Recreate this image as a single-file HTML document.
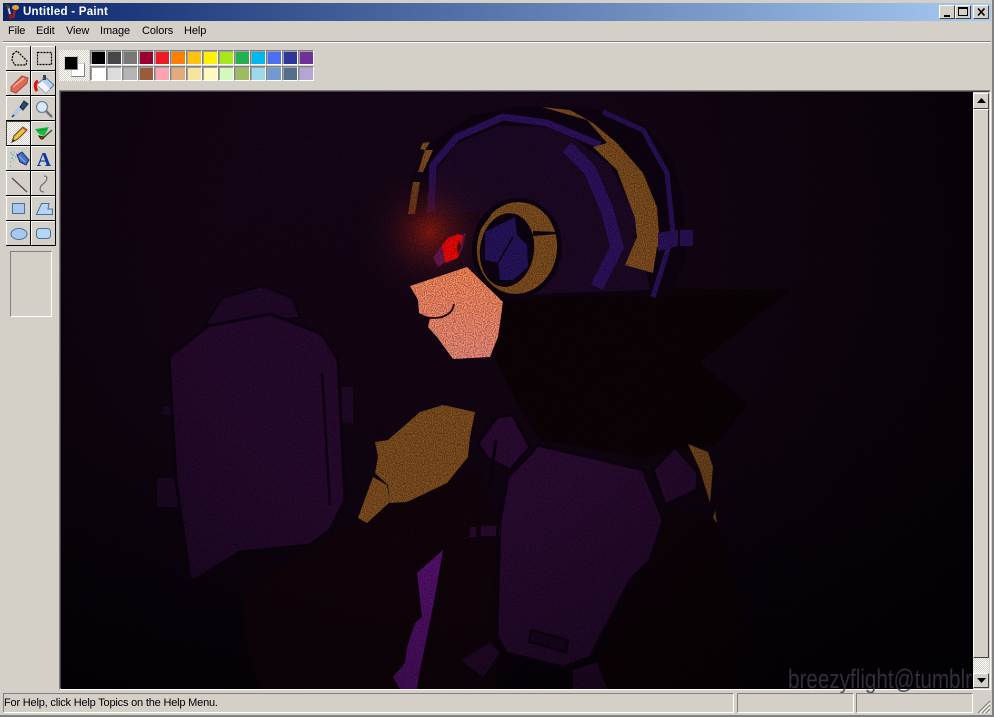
<!DOCTYPE html>
<html><head><meta charset="utf-8"><title>Untitled - Paint</title>
<style>
html,body{margin:0;padding:0;background:#d4d0c8}
body{width:994px;height:717px;position:relative;overflow:hidden;font-family:"Liberation Sans",sans-serif;font-size:11px;color:#000}
.a{position:absolute}
#edge{left:0;top:0;width:992px;height:715px;border-right:2px solid #808080;border-bottom:2px solid #808080;box-sizing:content-box}
#title{left:3px;top:3px;width:988px;height:18px;background:linear-gradient(90deg,#0a246a,#a6caf0)}
#tt{left:23px;top:5px;color:#fff;font-weight:bold;font-size:11.5px;line-height:14px;letter-spacing:.25px}
.wb{top:5px;height:14px;width:16px;box-sizing:border-box;background:#d4d0c8;border-top:1px solid #fff;border-left:1px solid #fff;border-right:1px solid #404040;border-bottom:1px solid #404040}
.m{top:25px;line-height:13px;letter-spacing:-.1px}
.sw{position:absolute;width:16px;height:15px;box-sizing:border-box;border:1px solid;border-color:#808080 #fff #fff #808080;box-shadow:inset 1px 1px 0 #a0a0a0}
.tb{position:absolute;width:24px;height:24px;border-top:1px solid #fff;border-left:1px solid #fff;box-sizing:border-box;background:#d4d0c8}
.tb svg{position:absolute;left:0;top:0}
.st{top:693px;height:20px;box-sizing:border-box;border:1px solid;border-color:#808080 #fff #fff #808080}
.dith{background:repeating-conic-gradient(#d4d0c8 0 25%,#fff 0 50%) 0 0/2px 2px}
.sb{left:973px;width:16px;box-sizing:border-box;background:#d4d0c8;border-top:1px solid #fff;border-left:1px solid #fff;border-right:1px solid #404040;border-bottom:1px solid #404040}
</style></head><body>
<div class="a" id="edge"></div>
<div class="a" id="title"></div>
<svg class="a" style="left:5px;top:4px" width="14" height="17" viewBox="0 0 14 17"><path d="M3 2L6 14" stroke="#c8c8d8" stroke-width="2"/><path d="M5 10L6 15" stroke="#8a1a1a" stroke-width="3"/><path d="M10 6L8 14" stroke="#a02020" stroke-width="2.500"/><ellipse cx="10.500" cy="3.500" rx="3.500" ry="2.500" fill="#e8a030"/><path d="M1 1L4 4" stroke="#604020" stroke-width="2"/></svg>
<div class="a" id="tt">Untitled - Paint</div>
<div class="a wb" style="left:939px"><div class="a" style="left:4px;top:9px;width:6px;height:2px;background:#000"></div></div>
<div class="a wb" style="left:955px"><div class="a" style="left:2px;top:1px;width:10px;height:9px;box-sizing:border-box;border:1px solid #000;border-top-width:2px"></div></div>
<div class="a wb" style="left:973px"><svg class="a" style="left:3px;top:2px" width="9" height="8"><path d="M1 0.500L7.500 7.500M7.500 0.500L1 7.500" stroke="#000" stroke-width="1.600"/></svg></div>
<div class="a m" style="left:8px">File</div><div class="a m" style="left:36px">Edit</div><div class="a m" style="left:66px">View</div><div class="a m" style="left:100px">Image</div><div class="a m" style="left:142px">Colors</div><div class="a m" style="left:184px">Help</div>
<div class="a" style="left:3px;top:41px;width:988px;height:1px;background:#808080"></div>
<div class="a" style="left:3px;top:42px;width:988px;height:1px;background:#fff"></div>

<!-- tools -->
<div class="a" style="left:6px;top:46px;width:50px;height:200px;background:#000"></div>
<div class="tb" style="left:6px;top:46px"><svg width="24" height="24"><path d="M6 7L10 4L15 9L20 14L19 18L8 18L5 13Z" fill="none" stroke="#000" stroke-width="1.200" stroke-dasharray="2 1"/></svg></div>
<div class="tb" style="left:31px;top:46px"><svg width="24" height="24"><rect x="5.500" y="5.500" width="14" height="12" fill="none" stroke="#000" stroke-width="1.200" stroke-dasharray="2 1"/></svg></div>
<div class="tb" style="left:6px;top:71px"><svg width="24" height="24"><path d="M4 15L15 4L21 6L20 11L9 21L4 19Z" fill="#dd6a55" stroke="#a84a38"/><path d="M6 15L17 6" fill="none" stroke="#f4a896" stroke-width="1.500"/></svg></div>
<div class="tb" style="left:31px;top:71px"><svg width="24" height="24"><path d="M13 5L22 13L14 21L5 13Z" fill="#b8d0f0" stroke="#5a7ca8"/><path d="M5 13L14 21L18 17L10 9Z" fill="#fff" opacity=".8"/><path d="M6 9C2 11 3 16 5 19" fill="none" stroke="#e01010" stroke-width="3"/><rect x="11" y="3" width="3" height="5" fill="#444"/></svg></div>
<div class="tb" style="left:6px;top:96px"><svg width="24" height="24"><path d="M6 19L14 10" stroke="#b0c8e8" stroke-width="4"/><path d="M5 20L7 18" stroke="#303848" stroke-width="1.500"/><path d="M13 10L17 4L21 7L16 13Z" fill="#2a4a70" stroke="#1a2a40"/></svg></div>
<div class="tb" style="left:31px;top:96px"><svg width="24" height="24"><circle cx="10" cy="10" r="5.500" fill="#d8e8f8" stroke="#708898" stroke-width="1.300"/><path d="M14 14L20 20" stroke="#707070" stroke-width="2.500"/></svg></div>
<div class="tb dith" style="left:6px;top:121px;border-color:#404040;border-width:1px 0 0 1px"><svg width="24" height="24"><path d="M5 20L7 14L16 5L20 8L11 17Z" fill="#f0c040" stroke="#604010"/><path d="M5 20L6 17L8 19Z" fill="#202020"/><path d="M15 6L19 9L20 8L16 5Z" fill="#e04040"/></svg></div>
<div class="tb" style="left:31px;top:121px"><svg width="24" height="24"><path d="M3 7L17 5L14 11L12 14L7 12Z" fill="#10c040"/><path d="M5 9L15 7" stroke="#0a9030"/><path d="M10 17L20 8" stroke="#504030" stroke-width="1.500"/><path d="M7 14C9 18 11 18 12 15Z" fill="#806020" stroke="#402000"/></svg></div>
<div class="tb" style="left:6px;top:146px"><svg width="24" height="24"><path d="M10 8L15 5L22 13L19 18L13 15Z" fill="#4070c8" stroke="#203070"/><path d="M12 9L18 15" stroke="#90b0e8"/><path d="M3 6h2M7 5h1M5 8h2M9 7h1M4 11h2M8 10h1M3 15h1M6 13h1M3 19h1" stroke="#40b0d8"/></svg></div>
<div class="tb" style="left:31px;top:146px"><svg width="24" height="24"><text x="12" y="19" text-anchor="middle" font-family="Liberation Serif,serif" font-weight="bold" font-size="20" fill="#1038a8">A</text></svg></div>
<div class="tb" style="left:6px;top:171px"><svg width="24" height="24"><path d="M5 6L20 20" stroke="#505050" stroke-width="1.300"/></svg></div>
<div class="tb" style="left:31px;top:171px"><svg width="24" height="24"><path d="M12 4C17 4 15 9 11 12C7 15 7 20 12 20" fill="none" stroke="#707070" stroke-width="1.200"/></svg></div>
<div class="tb" style="left:6px;top:196px"><svg width="24" height="24"><rect x="5.500" y="6.500" width="12" height="10" fill="#a8c8f0" stroke="#4a70a0"/></svg></div>
<div class="tb" style="left:31px;top:196px"><svg width="24" height="24"><path d="M4.500 17.500L9.500 6.500H17L16 12H20.500V17.500Z" fill="#b8d4f4" stroke="#4a70a0"/></svg></div>
<div class="tb" style="left:6px;top:221px"><svg width="24" height="24"><ellipse cx="12" cy="12" rx="8" ry="5.500" fill="#a8c8f0" stroke="#4a70a0"/></svg></div>
<div class="tb" style="left:31px;top:221px"><svg width="24" height="24"><rect x="4.500" y="6.500" width="14" height="10" rx="3" fill="#b8d4f4" stroke="#4a70a0"/></svg></div>
<div class="a" style="left:10px;top:251px;width:42px;height:66px;box-sizing:border-box;border:1px solid;border-color:#808080 #fff #fff #808080"></div>

<!-- colour box -->
<div class="a dith" style="left:59px;top:50px;width:30px;height:31px"></div>
<div class="a" style="left:71px;top:63px;width:14px;height:14px;background:#fff;box-sizing:border-box;border:1px solid;border-color:#d4d0c8 #808080 #808080 #d4d0c8"></div>
<div class="a" style="left:64px;top:56px;width:14px;height:14px;background:#000;box-sizing:border-box;border:1px solid;border-color:#d4d0c8 #808080 #808080 #d4d0c8"></div>

<i class="sw" style="left:90px;top:50px;background:#000000"></i><i class="sw" style="left:106px;top:50px;background:#464646"></i><i class="sw" style="left:122px;top:50px;background:#787878"></i><i class="sw" style="left:138px;top:50px;background:#990030"></i><i class="sw" style="left:154px;top:50px;background:#ed1c24"></i><i class="sw" style="left:170px;top:50px;background:#ff7e00"></i><i class="sw" style="left:186px;top:50px;background:#ffc20e"></i><i class="sw" style="left:202px;top:50px;background:#fff200"></i><i class="sw" style="left:218px;top:50px;background:#a8e61d"></i><i class="sw" style="left:234px;top:50px;background:#22b14c"></i><i class="sw" style="left:250px;top:50px;background:#00b7ef"></i><i class="sw" style="left:266px;top:50px;background:#4d6df3"></i><i class="sw" style="left:282px;top:50px;background:#2f3699"></i><i class="sw" style="left:298px;top:50px;background:#6f3198"></i>
<i class="sw" style="left:90px;top:66px;background:#ffffff"></i><i class="sw" style="left:106px;top:66px;background:#dcdcdc"></i><i class="sw" style="left:122px;top:66px;background:#b4b4b4"></i><i class="sw" style="left:138px;top:66px;background:#9c5a3c"></i><i class="sw" style="left:154px;top:66px;background:#ffa3b1"></i><i class="sw" style="left:170px;top:66px;background:#e5aa7a"></i><i class="sw" style="left:186px;top:66px;background:#f5e49c"></i><i class="sw" style="left:202px;top:66px;background:#fff9bd"></i><i class="sw" style="left:218px;top:66px;background:#d3f9bc"></i><i class="sw" style="left:234px;top:66px;background:#9dbb61"></i><i class="sw" style="left:250px;top:66px;background:#99d9ea"></i><i class="sw" style="left:266px;top:66px;background:#709ad1"></i><i class="sw" style="left:282px;top:66px;background:#546d8e"></i><i class="sw" style="left:298px;top:66px;background:#b5a5d5"></i>

<!-- canvas frame -->
<div class="a" style="left:59px;top:90px;width:932px;height:600px;box-sizing:border-box;border:1px solid;border-color:#808080 #fff #fff #808080"></div>
<div class="a" style="left:60px;top:91px;width:930px;height:598px;box-sizing:border-box;border:1px solid;border-color:#404040 #d4d0c8 #d4d0c8 #404040"></div>

<svg class="a" style="left:0;top:0" width="994" height="717" viewBox="0 0 994 717">
<defs>
<clipPath id="cv"><rect x="61" y="92" width="912" height="597"/></clipPath>
<filter id="nz" x="0" y="0" width="100%" height="100%" color-interpolation-filters="sRGB"><feTurbulence type="fractalNoise" baseFrequency="0.9" numOctaves="1" seed="4"/><feColorMatrix values="0 0 0 0 0 0 0 0 0 0 0 0 0 0 0 8 0 0 0 -3.600"/></filter>
<radialGradient id="glow" gradientUnits="userSpaceOnUse" cx="430" cy="232" r="72"><stop offset="0" stop-color="#a82010" stop-opacity=".8"/><stop offset=".3" stop-color="#701818" stop-opacity=".55"/><stop offset=".65" stop-color="#401020" stop-opacity=".22"/><stop offset="1" stop-color="#280818" stop-opacity="0"/></radialGradient>
<radialGradient id="vig" gradientUnits="userSpaceOnUse" cx="430" cy="300" r="640"><stop offset=".35" stop-color="#000" stop-opacity="0"/><stop offset="1" stop-color="#000" stop-opacity=".7"/></radialGradient>
<linearGradient id="bg" x1="0" y1="0" x2="0" y2="1"><stop offset="0" stop-color="#170618"/><stop offset=".55" stop-color="#130514"/><stop offset="1" stop-color="#09030c"/></linearGradient>
<linearGradient id="skin" x1="0" y1="0" x2="0" y2="1"><stop offset="0" stop-color="#ff8a5c"/><stop offset="1" stop-color="#f58f7c"/></linearGradient>
</defs>
<g clip-path="url(#cv)">
<rect x="61" y="92" width="912" height="597" fill="url(#bg)"/>
<!-- backpack -->
<path d="M163 407H176V415H163ZM157 478H182V507H157ZM342 387H353V423H342Z" fill="#22092a"/>
<path d="M205 325L222 298L262 286L293 298L300 318Z" fill="#22092a" stroke="#0e0310" stroke-width="2"/>
<path d="M169 357L208 326L270 314L322 334L338 360L345 500L330 530L310 545L240 552L198 578L190 580L176 480Z" fill="#280a30" stroke="#0e0310" stroke-width="3"/>
<path d="M322 373L330 505" stroke="#0e0310" stroke-width="2.500" fill="none"/>
<path d="M200 580Q240 550 315 545" stroke="#0e0310" stroke-width="3" fill="none"/>
<!-- dark arm -->
<path d="M245 590L340 530L420 490L480 470L500 540L497 689H260L245 640Z" fill="#12040c"/>
<path d="M650 560L670 510L720 520L747 640L735 689H590L630 590Z" fill="#0f0309"/>
<!-- hair -->
<path d="M495 296L650 288L790 290L700 362L748 405L716 445L640 458L540 440L515 400L495 360Z" fill="#0d0307"/>
<!-- torso -->
<path d="M537 445L643 470L663 520L650 560L630 580L590 657L563 667L507 653L497 637L500 523L508 477L532 453Z" fill="#2c0b34" stroke="#0e0310" stroke-width="2.500"/>
<path d="M478 443L497 417L513 415L530 447L510 470L487 458Z" fill="#2c0b34" stroke="#0e0310" stroke-width="3"/>
<path d="M653 470L675 447L698 473L697 490L665 505Z" fill="#2c0b34" stroke="#0e0310" stroke-width="3"/>
<path d="M467 657L490 642L500 653L483 677L460 660Z" fill="#280a30"/>
<path d="M573 670L597 662L607 689H573Z" fill="#280a30"/>
<path d="M481 526H500V536H481ZM470 527H476V537H470Z" fill="#2c0b34"/>
<path d="M489 489L496 440M492 620L500 500" stroke="#0e0310" stroke-width="3" fill="none"/>
<path d="M531 630L568 640L566 652L529 642Z" fill="#1c0724" stroke="#0e0310" stroke-width="2"/>
<!-- gold hand / shoulder -->
<path d="M375 442L388 440L420 412L443 405L475 412L470 437L468 457L447 483L407 502L390 503L388 485L375 473L378 457Z" fill="#835020"/>
<path d="M373 477L387 485L390 502L367 523L358 518Z" fill="#835020"/>
<path d="M688 444L708 452L713 467L710 503L700 470Z" fill="#835020"/>
<path d="M715 510L717 523L713 518Z" fill="#835020"/>
<!-- magenta -->
<path d="M443 550L433 607L420 670L417 689H400L393 677L405 663L407 647L415 623L422 617L417 573Z" fill="#5e127a"/>
<!-- helmet -->
<path d="M404 215L410 180L433 141L473 115L523 106L590 108L645 125L672 160L684 200L686 260L670 296L550 296L503 302L467 267L410 220Z" fill="#0e0312"/>
<path d="M425 215L430 180L455 145L500 125L560 128L610 165L635 215L650 290L560 293L503 297L467 267L430 230Z" fill="#1d0926"/>
<path d="M603 112L643 130L667 173L673 233L653 297" fill="none" stroke="#2e1260" stroke-width="5"/>
<path d="M431 212L433 165L457 137L503 117L547 123L600 145" fill="none" stroke="#2e1260" stroke-width="7"/>
<path d="M567 147L590 170L607 210L617 247L597 287" fill="none" stroke="#2e1260" stroke-width="13"/>
<path d="M633 235H652V238L640 245Z" fill="#0a0210"/>
<!-- gold band -->
<path d="M542 107L570 110L593 123L617 143L643 173L657 207L659 233L677 230L677 243L657 247L653 273L625 265L637 237L635 218L627 197L617 170L593 147L607 143L587 120Z" fill="#835020"/>
<path d="M413 182L420 182L415 214L408 214ZM425 150L433 150L423 172L418 172ZM423 143L430 142L425 150L420 149Z" fill="#835020"/>
<path d="M658 233L678 230V246L658 251ZM680 230H693V246H680Z" fill="#2e1260"/>
<!-- visor dark -->
<path d="M410 222L432 214L480 212L478 285L467 267L440 275L425 262Z" fill="#1a0718"/>
<!-- glow -->
<circle cx="430" cy="232" r="72" fill="url(#glow)"/>
<!-- eye -->
<path d="M433 258L442 245L445 262L438 267Z" fill="#6a1a50"/>
<path d="M460 235L466 233L463 247L459 255Z" fill="#5a1a50"/>
<path d="M442 245L448 238L458 234L463 236L458 258L445 263Z" fill="#f60808"/>
<path d="M459 241L461 246L458 254L457 246Z" fill="#400000"/>
<!-- ring -->
<ellipse cx="517" cy="248" rx="45" ry="50" fill="#0e0312" transform="rotate(8 517 248)"/>
<ellipse cx="517" cy="248" rx="40" ry="46" fill="#835020" transform="rotate(8 517 248)"/>
<ellipse cx="507" cy="250" rx="27" ry="37" fill="#0e0312" transform="rotate(8 507 250)"/>
<path d="M491 215L480 230L478 222L486 212Z" fill="#0e0312"/>
<path d="M533 231L558 232L557 234L533 236Z" fill="#0e0312"/>
<path d="M485 232L515 217L517 235L527 245L528 267L513 280L500 280L498 263L485 260Z" fill="#271460"/>
<path d="M513 237L498 263" stroke="#0e0312" stroke-width="1.500"/>
<!-- face -->
<path d="M410 286L467 267L503 302L498 337L490 357L453 359L437 337L428 327L430 318L419 313L418 300Z" fill="url(#skin)"/>
<path d="M424 317Q440 320 448 314Q453 311 454 304" fill="none" stroke="#200308" stroke-width="1.800"/>
<!-- noise + vignette -->
<rect x="61" y="92" width="912" height="597" filter="url(#nz)" opacity=".32"/>
<rect x="61" y="92" width="912" height="597" fill="url(#vig)"/>
</g>
<text x="788" y="688" font-family="Liberation Sans,sans-serif" font-size="27" fill="#3e3b48" fill-opacity=".8" textLength="184" lengthAdjust="spacingAndGlyphs">breezyflight@tumblr</text>
</svg>

<!-- scrollbar -->
<div class="a dith" style="left:973px;top:93px;width:16px;height:595px"></div>
<div class="a sb" style="top:93px;height:16px"><svg class="a" style="left:3px;top:4px" width="9" height="6"><path d="M4.500 0L9 5H0Z" fill="#000"/></svg></div>
<div class="a sb" style="top:109px;height:549px"></div>
<div class="a sb" style="top:673px;height:15px"><svg class="a" style="left:3px;top:4px" width="9" height="6"><path d="M0 0H9L4.500 5Z" fill="#000"/></svg></div>

<!-- status -->
<div class="a st" style="left:3px;width:731px"></div>
<div class="a st" style="left:737px;width:117px"></div>
<div class="a st" style="left:856px;width:117px"></div>
<div class="a" style="left:4px;top:697px;line-height:13px;letter-spacing:-.19px">For Help, click Help Topics on the Help Menu.</div>
<svg class="a" style="left:977px;top:700px" width="14" height="14"><path d="M13 1L1 13M13 5L5 13M13 9L9 13" stroke="#808080" stroke-width="1.200"/><path d="M13 3L3 13M13 7L7 13M13 11L11 13" stroke="#fff"/></svg>
</body></html>
